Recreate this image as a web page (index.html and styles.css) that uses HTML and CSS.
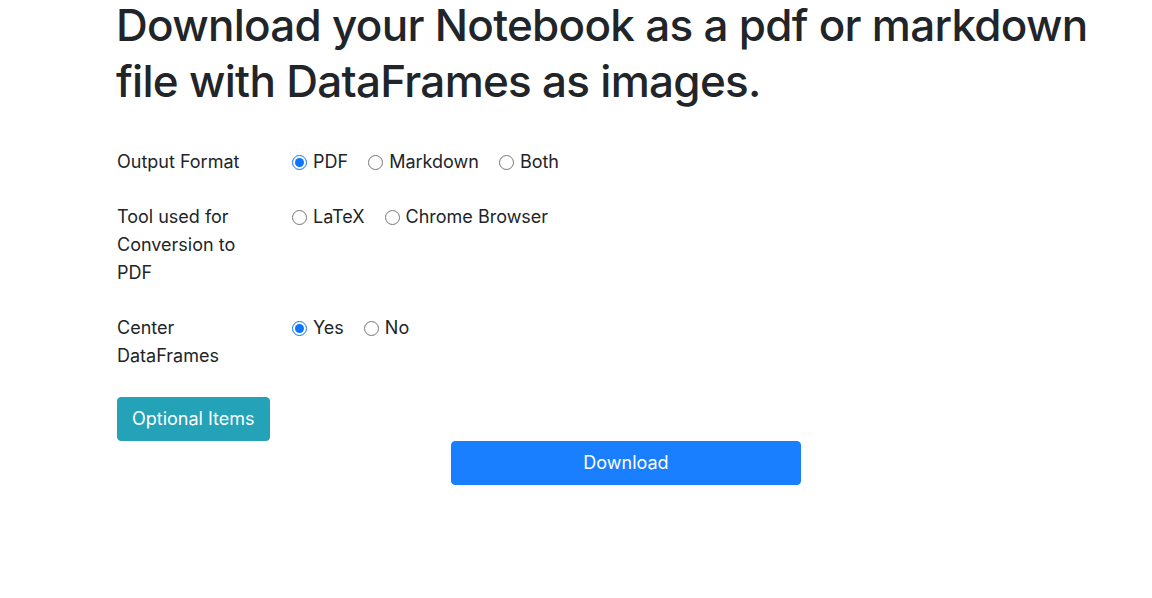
FILE: index.html
```html
<!DOCTYPE html>
<html lang="en">
<head>
<meta charset="utf-8">
<title>Download Notebook</title>
<link rel="stylesheet" href="styles.css">
</head>
<body>
<div class="container">
  <h1 class="title">Download your Notebook as a pdf or markdown file with DataFrames as images.</h1>
  <form class="form">
    <div class="form-row">
      <div class="label">Output Format</div>
      <div class="options">
        <label class="opt"><input type="radio" name="fmt" checked><span>PDF</span></label>
        <label class="opt"><input type="radio" name="fmt"><span>Markdown</span></label>
        <label class="opt"><input type="radio" name="fmt"><span>Both</span></label>
      </div>
    </div>
    <div class="form-row">
      <div class="label">Tool used for Conversion to PDF</div>
      <div class="options">
        <label class="opt"><input type="radio" name="tool"><span>LaTeX</span></label>
        <label class="opt"><input type="radio" name="tool"><span>Chrome Browser</span></label>
      </div>
    </div>
    <div class="form-row">
      <div class="label">Center DataFrames</div>
      <div class="options">
        <label class="opt"><input type="radio" name="center" checked><span>Yes</span></label>
        <label class="opt"><input type="radio" name="center"><span>No</span></label>
      </div>
    </div>
    <div class="optional">
      <button type="button" class="btn btn-info">Optional Items</button>
    </div>
    <div class="submit">
      <button type="button" class="btn btn-primary btn-download">Download</button>
    </div>
  </form>
</div>
</body>
</html>
```

FILE: styles.css
```css
* { box-sizing: border-box; }
html, body { margin: 0; padding: 0; background: #fff; }
body {
  font-family: Inter, "Noto Sans", sans-serif;
  font-size: 18px;
  line-height: 28px;
  color: #212529;
}
.container {
  padding: 0 17px 0 117px;
}
.title {
  margin: -3px 0 0 -1px;
  font-size: 44px;
  font-weight: 500;
  line-height: 56px;
  letter-spacing: -0.72px;
  color: #212529;
}
.form {
  margin-top: 39px;
}
.form-row {
  display: flex;
  margin-bottom: 27px;
}
.label {
  width: 175px;
  flex: 0 0 175px;
  padding-right: 30px;
}
.options {
  display: flex;
  align-items: flex-start;
}
.opt {
  display: inline-flex;
  align-items: center;
  margin-right: 20px;
  height: 28px;
}
.opt input {
  width: 15px;
  height: 15px;
  margin: 0 6px 0 0;
  accent-color: #0a75ff;
}
.btn {
  font-family: inherit;
  font-size: 18px;
  line-height: 28px;
  padding: 7px 14px;
  border: 1px solid transparent;
  border-radius: 4px;
  color: #fff;
  cursor: pointer;
}
.btn-info {
  background: #23a2b8;
  border-color: #23a2b8;
}
.optional {
  height: 44px;
}
.submit {
  display: flex;
  justify-content: center;
}
.btn-primary {
  background: #1a7fff;
  border-color: #1a7fff;
}
.btn-download {
  width: 350px;
}
```
